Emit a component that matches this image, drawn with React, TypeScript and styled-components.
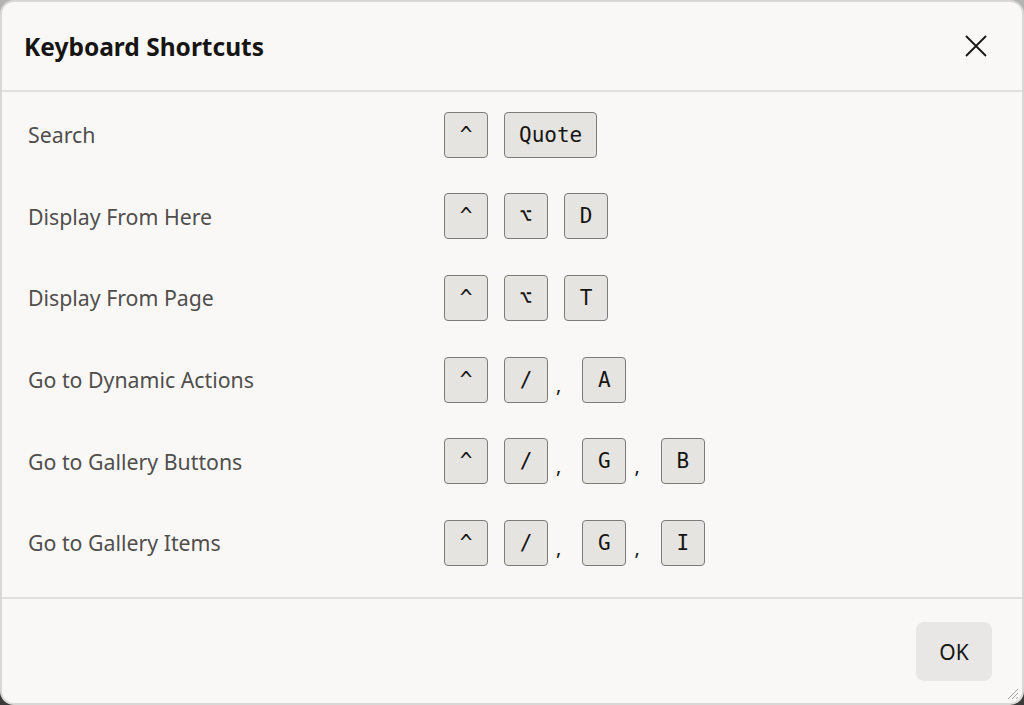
import React from "react";
import styled, { createGlobalStyle } from "styled-components";

const GlobalStyle = createGlobalStyle`
  html, body {
    margin: 0;
    padding: 0;
    background: linear-gradient(#b4b4b4, #3a3a3a);
    font-family: "Noto Sans", "Open Sans", sans-serif;
  }
`;

const Dialog = styled.div`
  box-sizing: border-box;
  width: 1024px;
  height: 705px;
  display: flex;
  flex-direction: column;
  background: #f9f8f6;
  border: 2px solid #d9d8d6;
  border-radius: 14px;
  position: relative;
  overflow: hidden;
`;

const Header = styled.div`
  height: 90px;
  flex-shrink: 0;
  display: flex;
  align-items: center;
  justify-content: space-between;
  padding: 0 26px 0 22px;
  box-sizing: border-box;
  border-bottom: 2px solid #e2e0dd;
`;

const Title = styled.h1`
  margin: 0;
  font-size: 24.5px;
  font-weight: 700;
  color: #161513;
`;

const CloseButton = styled.button`
  width: 40px;
  height: 40px;
  display: flex;
  align-items: center;
  justify-content: center;
  border: 0;
  background: transparent;
  padding: 0;
  cursor: pointer;
`;

const Body = styled.div`
  flex: 1;
  padding: 2px 0 0 26px;
  border-bottom: 2px solid #e2e0dd;
`;

const Row = styled.div`
  height: 81.6px;
  display: grid;
  grid-template-columns: 416px 1fr;
  align-items: center;
`;

const Label = styled.div`
  font-size: 21.3px;
  color: #504e4c;
`;

const Keys = styled.div`
  display: flex;
  align-items: center;
  gap: 16px;
`;

const Key = styled.kbd`
  box-sizing: border-box;
  min-width: 44px;
  height: 46px;
  padding: 0 14px;
  display: inline-flex;
  align-items: center;
  justify-content: center;
  background: #e6e4e1;
  border: 1.5px solid #7d7b79;
  border-radius: 4px;
  font-family: "DejaVu Sans Mono", "Liberation Mono", monospace;
  font-size: 21px;
  color: #161513;
`;

const Sep = styled.span`
  margin: 0 5px 0 -8px;
  padding-top: 10px;
  font-size: 20px;
  line-height: 1;
  color: #161513;
`;

const Footer = styled.div`
  height: 104px;
  flex-shrink: 0;
  display: flex;
  align-items: flex-start;
  justify-content: flex-end;
  padding: 23px 30px 0 0;
  box-sizing: border-box;
`;

const OkButton = styled.button`
  width: 76px;
  height: 59px;
  border: 0;
  border-radius: 8px;
  background: #e8e7e5;
  font-family: "Noto Sans", "Open Sans", sans-serif;
  font-size: 21px;
  color: #161513;
  cursor: pointer;
`;

const Grip = styled.svg`
  position: absolute;
  right: 3px;
  bottom: 3px;
`;

type Shortcut = { label: string; keys: string[][] };

const shortcuts: Shortcut[] = [
  { label: "Search", keys: [["^", "Quote"]] },
  { label: "Display From Here", keys: [["^", "⌥", "D"]] },
  { label: "Display From Page", keys: [["^", "⌥", "T"]] },
  { label: "Go to Dynamic Actions", keys: [["^", "/"], ["A"]] },
  { label: "Go to Gallery Buttons", keys: [["^", "/"], ["G"], ["B"]] },
  { label: "Go to Gallery Items", keys: [["^", "/"], ["G"], ["I"]] },
];

const App = () => {
  return (
    <>
      <GlobalStyle />
      <Dialog>
        <Header>
          <Title>Keyboard Shortcuts</Title>
          <CloseButton aria-label="Close">
            <svg width="22" height="22" viewBox="0 0 22 22">
              <path d="M1 1 L21 21 M21 1 L1 21" stroke="#161513" strokeWidth="1.8" />
            </svg>
          </CloseButton>
        </Header>
        <Body>
          {shortcuts.map((s) => (
            <Row key={s.label}>
              <Label>{s.label}</Label>
              <Keys>
                {s.keys.map((group, gi) => (
                  <React.Fragment key={gi}>
                    {gi > 0 && <Sep>,</Sep>}
                    {group.map((k, ki) => (
                      <Key key={ki}>{k}</Key>
                    ))}
                  </React.Fragment>
                ))}
              </Keys>
            </Row>
          ))}
        </Body>
        <Footer>
          <OkButton>OK</OkButton>
        </Footer>
        <Grip width="14" height="14" viewBox="0 0 14 14">
          <path d="M13 3 L3 13 M13 7 L7 13 M13 11 L11 13" stroke="#a8a6a4" strokeWidth="1" />
        </Grip>
      </Dialog>
    </>
  );
};

export default App;
